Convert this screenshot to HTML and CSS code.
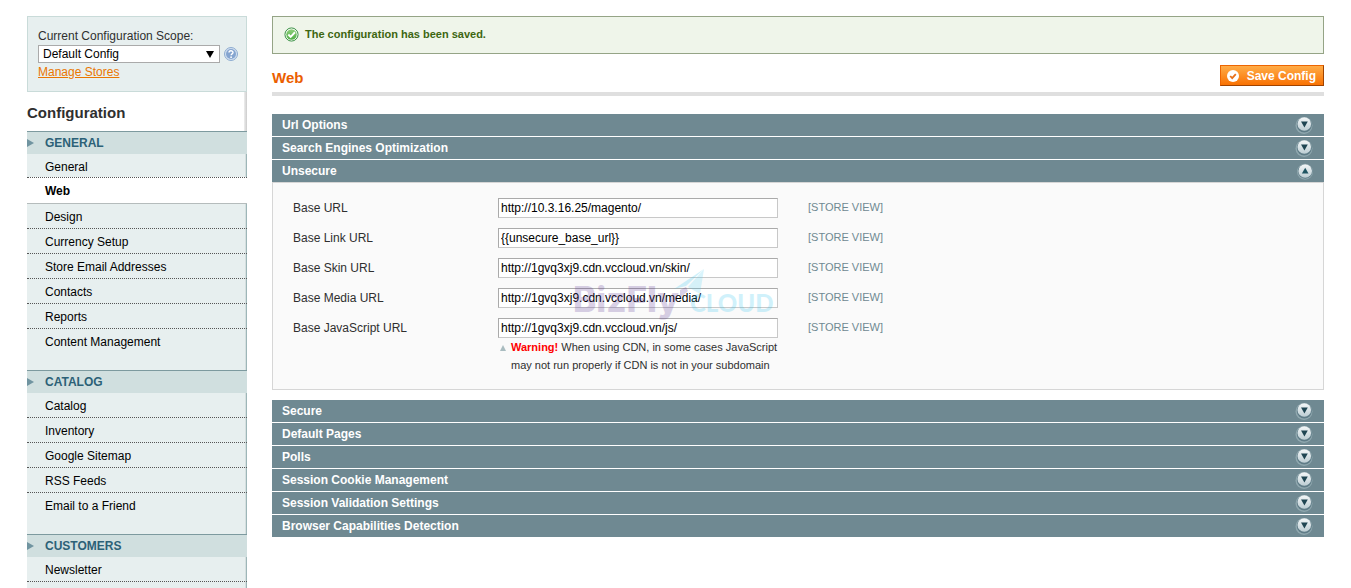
FILE: index.html
```html
<!DOCTYPE html>
<html lang="en">
<head>
  <meta charset="UTF-8">
  <meta name="viewport" content="width=device-width, initial-scale=1.0">
  <title>Configuration / Web</title>
  <link rel="stylesheet" href="styles.css">
</head>
<body>
  <!-- shared icons -->
  <svg class="sprite" width="0" height="0" aria-hidden="true">
    <defs>
      <linearGradient id="knob" x1="0" y1="0" x2="0" y2="1">
        <stop offset="0" stop-color="#f4f7f8"/>
        <stop offset="1" stop-color="#bccdd3"/>
      </linearGradient>
      <linearGradient id="green" x1="0" y1="0" x2="0" y2="1">
        <stop offset="0" stop-color="#8fd07c"/>
        <stop offset="1" stop-color="#4fae45"/>
      </linearGradient>
      <symbol id="icon-open" viewBox="0 0 18 18">
        <circle cx="9" cy="9.5" r="8.5" fill="#8fa7ae"/>
        <circle cx="9.3" cy="9" r="7.5" fill="#5f7c87"/>
        <circle cx="9.3" cy="8" r="6.8" fill="url(#knob)"/>
        <path d="M6 5.5h6.8L9.4 11.5z" fill="#1f4552"/>
      </symbol>
      <symbol id="icon-close" viewBox="0 0 18 18">
        <circle cx="10" cy="9.7" r="8" fill="#8fa7ae"/>
        <circle cx="10.2" cy="9.4" r="7.3" fill="#5f7c87"/>
        <circle cx="10.2" cy="9" r="6.8" fill="url(#knob)"/>
        <path d="M6.9 11.5h6.6L10.2 5.7z" fill="#1f5562"/>
      </symbol>
    </defs>
  </svg>

  <div class="columns">
    <aside class="side-col">
      <form class="switcher">
        <label for="scope">Current Configuration Scope:</label>
        <div class="switcher-row">
          <span class="select-wrap">
            <select id="scope">
              <option>Default Config</option>
            </select>
          </span>
          <a href="#" class="help" aria-label="Help">
            <svg width="14" height="14" viewBox="0 0 14 14">
              <circle cx="7" cy="7" r="6.5" fill="#d3e0f0" stroke="#8eacd0"/>
              <circle cx="7" cy="7" r="5" fill="#85a5d0"/>
              <path d="M5 5.6C5 3.2 9 3.2 9 5.5 9 6.9 7.1 6.8 7.1 8.3" fill="none" stroke="#fff" stroke-width="1.4"/>
              <circle cx="7.1" cy="10.2" r=".9" fill="#fff"/>
            </svg>
          </a>
        </div>
        <a href="#" class="manage">Manage Stores</a>
      </form>

      <h3>Configuration</h3>
      <nav class="tabs">
        <section>
          <h4>General</h4>
          <ul>
            <li><a href="#">General</a></li>
            <li class="active"><a href="#">Web</a></li>
            <li><a href="#">Design</a></li>
            <li><a href="#">Currency Setup</a></li>
            <li><a href="#">Store Email Addresses</a></li>
            <li><a href="#">Contacts</a></li>
            <li><a href="#">Reports</a></li>
            <li><a href="#">Content Management</a></li>
          </ul>
        </section>
        <section>
          <h4>Catalog</h4>
          <ul>
            <li><a href="#">Catalog</a></li>
            <li><a href="#">Inventory</a></li>
            <li><a href="#">Google Sitemap</a></li>
            <li><a href="#">RSS Feeds</a></li>
            <li><a href="#">Email to a Friend</a></li>
          </ul>
        </section>
        <section class="more">
          <h4>Customers</h4>
          <ul>
            <li><a href="#">Newsletter</a></li>
          </ul>
        </section>
      </nav>
    </aside>

    <main class="main-col">
      <div class="success-msg">
        <svg width="15" height="15" viewBox="0 0 16 16">
          <circle cx="8" cy="8" r="7" fill="#fff" stroke="#2f8b3a"/>
          <circle cx="8" cy="8" r="5.6" fill="url(#green)"/>
          <path d="M4.6 8l2.5 2.6 4.6-5" fill="none" stroke="#fff" stroke-width="2"/>
        </svg>
        <span>The configuration has been saved.</span>
      </div>

      <div class="content-header">
        <h1>Web</h1>
        <button type="button" class="save">
          <svg width="12" height="12" viewBox="0 0 12 12">
            <circle cx="6" cy="6" r="6" fill="#fff"/>
            <path d="M3.2 6l2 2.1 3.6-4" fill="none" stroke="#e8701a" stroke-width="1.8"/>
          </svg>
          <span>Save Config</span>
        </button>
      </div>

      <div class="entry-head"><a href="#">Url Options</a><svg width="18" height="18"><use href="#icon-open"/></svg></div>
      <div class="entry-head"><a href="#">Search Engines Optimization</a><svg width="18" height="18"><use href="#icon-open"/></svg></div>
      <div class="entry-head opened"><a href="#">Unsecure</a><svg width="18" height="18"><use href="#icon-close"/></svg></div>
      <form class="fieldset">
        <div class="field">
          <label for="base_url">Base URL</label>
          <input type="text" id="base_url" value="http://10.3.16.25/magento/">
          <span class="scope-label">[STORE VIEW]</span>
        </div>
        <div class="field">
          <label for="base_link_url">Base Link URL</label>
          <input type="text" id="base_link_url" value="{{unsecure_base_url}}">
          <span class="scope-label">[STORE VIEW]</span>
        </div>
        <div class="field">
          <label for="base_skin_url">Base Skin URL</label>
          <input type="text" id="base_skin_url" value="http://1gvq3xj9.cdn.vccloud.vn/skin/">
          <span class="scope-label">[STORE VIEW]</span>
        </div>
        <div class="field">
          <label for="base_media_url">Base Media URL</label>
          <input type="text" id="base_media_url" value="http://1gvq3xj9.cdn.vccloud.vn/media/">
          <span class="scope-label">[STORE VIEW]</span>
        </div>
        <div class="field">
          <label for="base_js_url">Base JavaScript URL</label>
          <input type="text" id="base_js_url" value="http://1gvq3xj9.cdn.vccloud.vn/js/">
          <span class="scope-label">[STORE VIEW]</span>
          <p class="note"><strong>Warning!</strong> When using CDN, in some cases JavaScript may not run properly if CDN is not in your subdomain</p>
        </div>

        <!-- brand watermark -->
        <svg class="watermark" width="204" height="56" viewBox="0 0 204 56">
          <text class="wm-biz" x="0" y="43">BizFly</text>
          <text class="wm-cloud" x="117" y="43">CLOUD</text>
          <path d="M101 20L131 0 113 17z" fill="#2cc4f0"/>
          <path d="M115 18L131 0 127 25z" fill="#55d2f5"/>
          <path d="M107 21l6-3 2 4-8 7z" fill="#55308f"/>
        </svg>
      </form>

      <div class="entry-head"><a href="#">Secure</a><svg width="18" height="18"><use href="#icon-open"/></svg></div>
      <div class="entry-head"><a href="#">Default Pages</a><svg width="18" height="18"><use href="#icon-open"/></svg></div>
      <div class="entry-head"><a href="#">Polls</a><svg width="18" height="18"><use href="#icon-open"/></svg></div>
      <div class="entry-head"><a href="#">Session Cookie Management</a><svg width="18" height="18"><use href="#icon-open"/></svg></div>
      <div class="entry-head"><a href="#">Session Validation Settings</a><svg width="18" height="18"><use href="#icon-open"/></svg></div>
      <div class="entry-head"><a href="#">Browser Capabilities Detection</a><svg width="18" height="18"><use href="#icon-open"/></svg></div>
    </main>
  </div>
</body>
</html>
```

FILE: styles.css
```css
* {
  box-sizing: border-box;
}
html {
  overflow: hidden;
}
body {
  margin: 0;
  background: #fff;
  color: #2f2f2f;
  font: 12px/18px "Liberation Sans", Arial, sans-serif;
}
h1, h3, h4, ul, p {
  margin: 0;
  padding: 0;
}
ul {
  list-style: none;
}
svg {
  display: block;
  flex: none;
}
.sprite {
  position: absolute;
}
.columns {
  display: flex;
  align-items: flex-start;
  gap: 25px;
  padding: 16px 27px 0;
}

/* left column */
.side-col {
  flex: none;
  width: 220px;
  background: linear-gradient(to right, #eee, #ccc) right / 3px 100% no-repeat;
}
.switcher {
  height: 76px;
  padding: 10px 8px 10px 10px;
  border: 1px solid #c9dbd9;
  background: #e7efef;
}
.switcher label {
  display: block;
}
.switcher-row {
  display: flex;
  align-items: center;
  justify-content: space-between;
}
.select-wrap {
  position: relative;
  width: 182px;
}
.select-wrap::after {
  content: "";
  position: absolute;
  top: 6px;
  right: 6px;
  border: 4px solid transparent;
  border-top: 7px solid #000;
  border-bottom: 0;
  pointer-events: none;
}
.select-wrap select {
  display: block;
  width: 100%;
  height: 18px;
  padding: 0 4px;
  border: 1px solid #aaa;
  border-radius: 0;
  background: #fff;
  color: #000;
  font: inherit;
  line-height: 16px;
  appearance: none;
}
.manage {
  color: #ea7601;
}
.side-col h3 {
  padding: 12px 0 9px;
  font-size: 15px;
}
.tabs section {
  padding-bottom: 17px;
  border-top: 1px solid #7d9a9f;
  background: linear-gradient(to right, #d5dfdf 50%, #9db6b8 50%) right / 2px 100% no-repeat #e7efef;
}
.tabs .more {
  padding-bottom: 6px;
}
.tabs h4 {
  display: flex;
  align-items: center;
  gap: 11px;
  height: 22px;
  background: #d0dfdf;
  color: #2c6177;
  font-size: 12px;
  text-transform: uppercase;
}
.tabs h4::before {
  content: "";
  border: 4px solid transparent;
  border-left: 7px solid #7094a0;
  border-right: 0;
}
.tabs li {
  border-bottom: 1px dotted #555;
}
.tabs section:not(.more) li:last-child {
  border-bottom: 0;
}
.tabs li a {
  display: block;
  padding: 4px 18px 2px;
  color: #000;
  text-decoration: none;
}
.tabs .active {
  margin-top: -2px;
  border-top: 1px dotted #555;
  border-bottom: 1px solid #b5bcbc;
  background: #fff;
}
.tabs .active a {
  padding-bottom: 3px;
  font-weight: bold;
}

/* main column */
.main-col {
  flex: 1;
  min-width: 0;
}
.success-msg {
  display: flex;
  gap: 6px;
  height: 38px;
  padding: 8px 11px;
  border: 1px solid #95a486;
  background: #eff5ea;
  color: #3d6611;
  font-size: 11px;
  font-weight: bold;
}
.success-msg svg {
  margin-top: 2px;
}
.content-header {
  display: flex;
  align-items: flex-start;
  justify-content: space-between;
  margin: 11px 0 18px;
  padding-bottom: 6px;
  border-bottom: 4px solid #dfdfdf;
}
.content-header h1 {
  padding-top: 5px;
  color: #eb5e00;
  font-size: 15px;
  line-height: 16px;
}
.save {
  display: flex;
  align-items: center;
  gap: 8px;
  height: 21px;
  padding: 0 7px 0 6px;
  border: 1px solid;
  border-color: #ed6502 #a04300 #a04300 #ed6502;
  background: linear-gradient(#ffac47, #f97203);
  color: #fff;
  font: bold 12px/18px "Liberation Sans", Arial, sans-serif;
  cursor: pointer;
}
.entry-head {
  display: flex;
  align-items: center;
  justify-content: space-between;
  height: 22px;
  margin-bottom: 1px;
  padding: 0 11px 0 10px;
  background: #6f8992;
}
.entry-head.opened {
  margin-bottom: 0;
}
.entry-head a {
  color: #fff;
  font-weight: bold;
  text-decoration: none;
}
.fieldset {
  position: relative;
  margin-bottom: 10px;
  padding: 15px 20px;
  border: 1px solid #d6d6d6;
  background: #fafafa;
}
.field {
  display: grid;
  grid-template-columns: 205px 280px 1fr;
  margin-bottom: 10px;
}
.field:last-of-type {
  margin-bottom: 0;
}
.field label {
  padding-top: 1px;
}
.field input {
  width: 100%;
  height: 20px;
  padding: 2px;
  border: 1px solid;
  border-color: #aaa #c8c8c8 #c8c8c8 #aaa;
  background: #fff;
  color: #000;
  font: inherit;
}
.scope-label {
  padding-left: 30px;
  color: #6f8992;
  font-size: 11px;
}
.note {
  position: relative;
  grid-column: 2;
  padding-left: 13px;
  font-size: 11px;
}
.note::before {
  content: "";
  position: absolute;
  top: 7px;
  left: 2px;
  border: 3px solid transparent;
  border-top: 0;
  border-bottom: 6px solid #a9bcc0;
}
.note strong {
  color: #f00;
}
.watermark {
  position: absolute;
  top: 86px;
  left: 300px;
  opacity: 0.22;
  pointer-events: none;
}
.wm-biz {
  fill: #55308f;
  font: 800 35px Inter, sans-serif;
}
.wm-cloud {
  fill: #2cc4f0;
  font: 900 24px Lato, sans-serif;
}
```
